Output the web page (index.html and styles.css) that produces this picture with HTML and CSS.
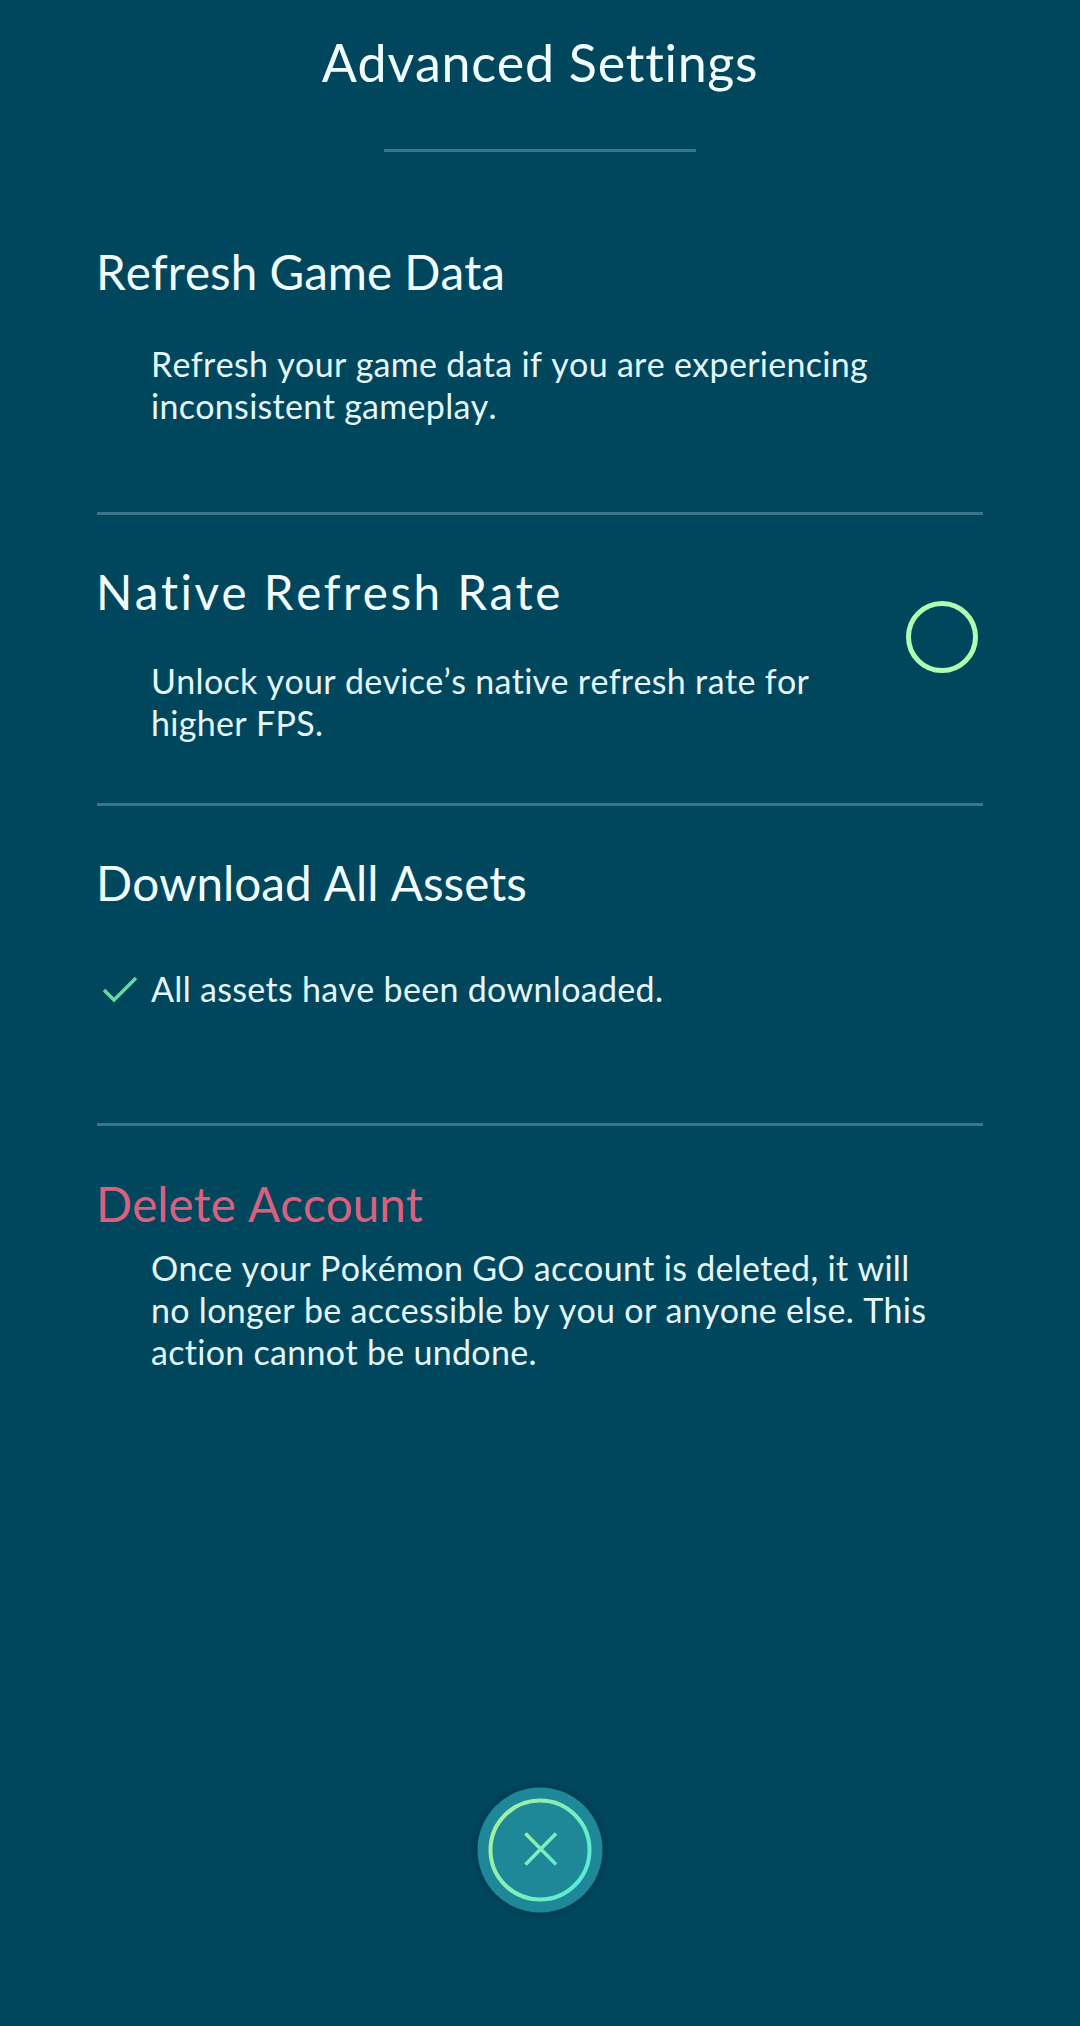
FILE: index.html
```html
<!DOCTYPE html>
<html lang="en">
<head>
<meta charset="utf-8">
<title>Advanced Settings</title>
<link rel="stylesheet" href="styles.css">
</head>
<body>
<main class="screen">
  <header class="header"><h1 class="title">Advanced Settings</h1></header>
  <section class="row refresh">
    <h2 class="heading">Refresh Game Data</h2>
    <p class="text">Refresh your game data if you are experiencing<br>inconsistent gameplay.</p>
  </section>
  <section class="row native">
    <div class="copy">
      <h2 class="heading">Native Refresh Rate</h2>
      <p class="text">Unlock your device’s native refresh rate for<br>higher FPS.</p>
    </div>
    <button class="toggle" aria-label="Native Refresh Rate"></button>
  </section>
  <section class="row download">
    <h2 class="heading">Download All Assets</h2>
    <div class="status">
      <svg class="check" viewBox="0 0 36 28"><path d="M2 15 L12 25 L34 3"/></svg>
      <p class="text">All assets have been downloaded.</p>
    </div>
  </section>
  <section class="row delete">
    <h2 class="heading">Delete Account</h2>
    <p class="text">Once your Pokémon GO account is deleted, it will<br>no longer be accessible by you or anyone else. This<br>action cannot be undone.</p>
  </section>
  <footer class="footer">
    <button class="close" aria-label="Close">
      <svg viewBox="0 0 126 126">
        <defs>
          <linearGradient id="ring" gradientUnits="userSpaceOnUse" x1="20" y1="40" x2="106" y2="86"><stop offset="0" stop-color="#a0f0a4"/><stop offset="1" stop-color="#5cecd2"/></linearGradient>
          <linearGradient id="cross" gradientUnits="userSpaceOnUse" x1="48" y1="47" x2="79" y2="78"><stop offset="0" stop-color="#9df0a6"/><stop offset="1" stop-color="#5cecd2"/></linearGradient>
        </defs>
        <circle cx="63" cy="63" r="62.5" fill="#1e8899"/>
        <circle cx="63" cy="63" r="49.5" fill="none" stroke="url(#ring)" stroke-width="4"/>
        <path d="M48.5 46.5 L79 77.5 M79 46.5 L48.5 77.5" fill="none" stroke="url(#cross)" stroke-width="3.5"/>
      </svg>
    </button>
  </footer>
</main>
</body>
</html>
```
FILE: styles.css
```css
* { box-sizing: border-box; }
body { margin: 0; background: #00475d; color: #e4f6fb; font-family: Lato, sans-serif; font-kerning: none; }
.screen { height: 2026px; padding: 0 97px; display: flex; flex-direction: column; }
.header { height: 152px; padding-top: 30px; width: 312px; align-self: center; border-bottom: 3px solid #3b7588; display: flex; justify-content: center; }
h1, h2, p { margin: 0; font-weight: 400; white-space: nowrap; }
.title { font-size: 52px; line-height: 64px; letter-spacing: .7px; color: #f2fdff; }
.row { border-bottom: 3px solid #3b7588; }
.heading { margin-left: -1px; font-size: 47.6px; line-height: 60px; letter-spacing: 0; color: #f2fdff; }
.text { font-size: 34px; line-height: 42px; padding-left: 54px; letter-spacing: .3px; }
.refresh { height: 363px; padding-top: 90px; }
.refresh .text { margin-top: 41px; }
.native { height: 291px; padding-top: 47px; display: flex; justify-content: space-between; }
.native .heading { letter-spacing: 2.5px; }
.native .text { margin-top: 38px; }
.toggle { width: 72px; height: 72px; margin: 39px 5px 0 0; padding: 0; border: 5px solid #b0ffb0; border-radius: 50%; background: none; }
.download { height: 320px; padding-top: 47px; }
.status { margin-top: 55px; display: flex; align-items: center; }
.check { width: 36px; height: 28px; margin-left: 5px; fill: none; stroke: #68d8a0; stroke-width: 3.5; }
.status .text { padding-left: 13px; }
.delete { padding-top: 48px; border: 0; }
.delete .heading { color: #d9607f; }
.delete .text { margin-top: 13px; }
.footer { margin-top: auto; padding-bottom: 113px; display: flex; justify-content: center; }
.close { width: 126px; height: 126px; padding: 0; border: 0; border-radius: 50%; background: none; box-shadow: 0 0 6px 2px #003b50; }
.close svg { display: block; width: 126px; height: 126px; }
```
